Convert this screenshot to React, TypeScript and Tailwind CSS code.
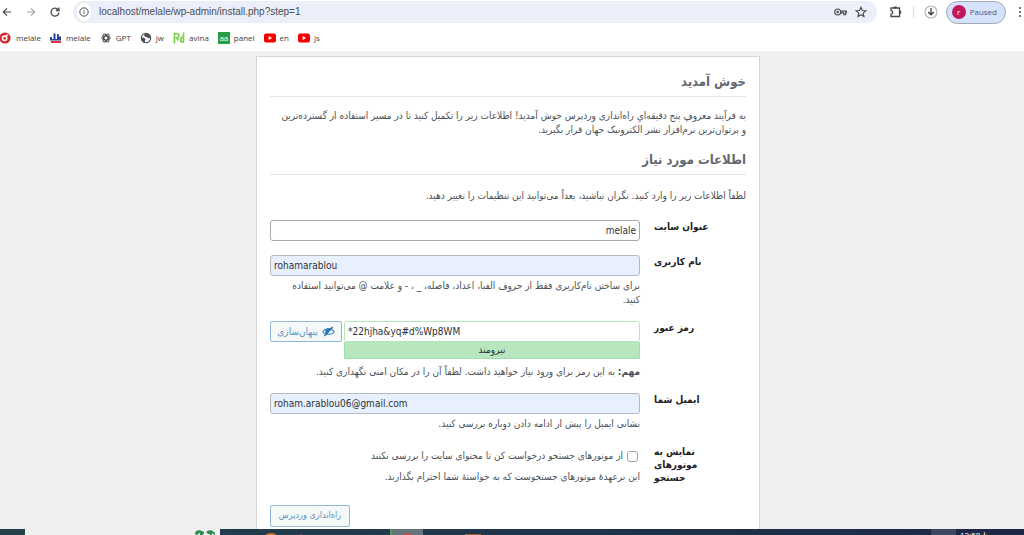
import React, { useState } from 'react';

interface Bookmark {
  label: string;
  icon: React.ReactNode;
}

const YoutubeIcon = () => (
  <svg viewBox="0 0 12 12" className="w-3 h-3">
    <rect x="0" y="1.5" width="12" height="9" rx="2" fill="#f40000" />
    <path d="M4.7 4v4L8.2 6z" fill="#fff" />
  </svg>
);

const bookmarks: Bookmark[] = [
  {
    label: 'melale',
    icon: (
      <svg viewBox="0 0 12 12" className="w-3 h-3">
        <circle cx="5" cy="6" r="5.600" fill="#d9222a" />
        <circle cx="4.600" cy="6.300" r="2.200" fill="none" stroke="#fff" strokeWidth="1.600" />
        <path d="M5.500 4.500l2.500-2" stroke="#fff" strokeWidth="1.400" />
      </svg>
    ),
  },
  {
    label: 'melale',
    icon: (
      <svg viewBox="0 0 12 12" className="w-3 h-3">
        <path d="M0 5h2v2h1.500V1.500h2V7H7V2h1.800v2.500H11V8.500H0z" fill="#2b3f9b" />
        <path d="M1 9h10v2H1z" fill="#e0303c" />
      </svg>
    ),
  },
  {
    label: 'GPT',
    icon: (
      <svg viewBox="0 0 12 12" className="w-3 h-3" fill="none" stroke="#4a4a4a" strokeWidth="1">
        <ellipse cx="6" cy="6" rx="4.400" ry="2" />
        <ellipse cx="6" cy="6" rx="4.400" ry="2" transform="rotate(60 6 6)" />
        <ellipse cx="6" cy="6" rx="4.400" ry="2" transform="rotate(120 6 6)" />
      </svg>
    ),
  },
  {
    label: 'jw',
    icon: (
      <svg viewBox="0 0 12 12" className="w-3 h-3">
        <circle cx="6" cy="6" r="4.700" fill="#fff" stroke="#4a4e52" strokeWidth="1.100" />
        <path d="M1.500 5.500l3 .5 1 1.500-1 3C2.500 9.800 1.300 8 1.500 5.500zM5 1.300c3-.5 5.300 1.400 5.700 4L8.500 6.500 7 5 5 4.800 4 3.200z" fill="#4a4e52" />
      </svg>
    ),
  },
  {
    label: 'avina',
    icon: (
      <svg viewBox="0 0 12 12" className="w-3 h-3" fill="none" stroke="#7ed04b" strokeWidth="1.700">
        <path d="M1.500 11.500V1.500h2c3.200 0 3.200 4.500 0 4.500l2 2.500M10.500 .5v10M10.500 5.200c-4 0-4 5 0 5" />
      </svg>
    ),
  },
  {
    label: 'panel',
    icon: (
      <span className="flex items-center justify-center w-3 h-3 bg-[#2a9d42] text-white leading-3">aa</span>
    ),
  },
  { label: 'en', icon: <YoutubeIcon /> },
  { label: 'js', icon: <YoutubeIcon /> },
];

const BrowserBar = () => (
  <header dir="ltr" className="shrink-0 bg-white text-[#3c4043] font-[family-name:'Open_Sans',sans-serif]">
    <div className="flex items-center h-6">
      <div className="flex items-center gap-3 pl-px pr-3">
        <button aria-label="Back">
          <svg viewBox="0 0 12 12" className="w-3 h-3" fill="none" stroke="#474a4d" strokeWidth="1.200">
            <path d="M10 6H2.500M6 2.300L2.300 6 6 9.700" />
          </svg>
        </button>
        <button aria-label="Forward">
          <svg viewBox="0 0 12 12" className="w-3 h-3" fill="none" stroke="#a5a8ab" strokeWidth="1.200">
            <path d="M2 6h7.500M6 2.300L9.700 6 6 9.700" />
          </svg>
        </button>
        <button aria-label="Reload">
          <svg viewBox="0 0 12 12" className="w-3 h-3" fill="none" stroke="#474a4d" strokeWidth="1.300">
            <path d="M9.300 3.800A4 4 0 1 0 10 6.500M9.900 1.500v3H6.800" />
          </svg>
        </button>
      </div>
      <div className="flex flex-1 items-center h-[22px] gap-2 pl-1 pr-2.5 rounded-full bg-[#ebeff9]">
        <span className="flex items-center justify-center w-[14px] h-[18px] rounded-full bg-white">
          <svg viewBox="0 0 12 12" className="w-[10px] h-[10px]" fill="none" stroke="#474a4d" strokeWidth="1.200">
            <circle cx="6" cy="6" r="5" />
            <path d="M6 5.300v3.200M6 3.200v1.200" />
          </svg>
        </span>
        <input
          aria-label="Address"
          defaultValue="localhost/melale/wp-admin/install.php?step=1"
          className="flex-1 min-w-0 bg-transparent text-[10px] leading-4 text-[#4a4d51] font-[family-name:'Liberation_Sans',sans-serif] outline-none"
        />
        <button aria-label="Passwords">
          <svg viewBox="0 0 14 10" className="w-[13px] h-[10px]" fill="none" stroke="#474a4d" strokeWidth="1.200">
            <circle cx="4" cy="5" r="3.200" />
            <circle cx="4" cy="5" r=".7" />
            <path d="M7 4h6.300v2h-.8v2h-2V6H7" />
          </svg>
        </button>
        <button aria-label="Bookmark">
          <svg viewBox="0 0 12 12" className="w-3 h-3" fill="none" stroke="#474a4d" strokeWidth="1.100">
            <path d="M6 1.300l1.400 3.200 3.400.3-2.600 2.300.8 3.400L6 8.700l-3 1.800.8-3.400L1.200 4.800l3.400-.3z" />
          </svg>
        </button>
      </div>
      <div className="flex items-center pl-3">
        <button aria-label="Extensions">
          <svg viewBox="0 0 14 14" className="w-[14px] h-[14px]" fill="none" stroke="#474a4d" strokeWidth="1.300">
            <path d="M2 3h8.500v8.500H2V9.200c2.200 0 2.200-3.700 0-3.700z" />
            <path d="M4.800 2.300h3M11.300 5.800v3" strokeWidth="1.800" />
          </svg>
        </button>
        <span className="w-px h-3 mx-2.5 bg-[#cfdff8]" />
        <button aria-label="Downloads">
          <svg viewBox="0 0 14 14" className="w-[14px] h-[14px]" fill="none">
            <circle cx="7" cy="7" r="6" stroke="#b5b8bb" strokeWidth="1.200" />
            <path d="M7 3v7M4.200 7L7 9.800 9.800 7" stroke="#3c4043" strokeWidth="1.300" />
          </svg>
        </button>
        <button className="flex items-center gap-1 h-[23px] ml-2 pl-[5px] pr-2 rounded-full border border-[#a3a8b3] bg-[#d5e2fc] text-[8px] text-[#46587f]">
          <span className="flex items-center justify-center w-[14px] h-[14px] rounded-full bg-[#c2185b] text-white">r</span>
          Paused
        </button>
        <button aria-label="Menu" className="ml-2.5">
          <svg viewBox="0 0 8 12" className="w-2 h-3" fill="#474a4d">
            <circle cx="4" cy="2" r="1" />
            <circle cx="4" cy="6" r="1" />
            <circle cx="4" cy="10" r="1" />
          </svg>
        </button>
      </div>
    </div>
    <nav className="flex items-center gap-[9px] h-[27px] text-[8px]">
      {bookmarks.map((b, i) => (
        <a key={i} href="#" className="flex items-center gap-1">
          {b.icon}
          {b.label}
        </a>
      ))}
    </nav>
  </header>
);

interface FieldProps {
  id: string;
  label: React.ReactNode;
  children: React.ReactNode;
}

const Field: React.FC<FieldProps> = ({ id, label, children }) => (
  <div className="flex">
    <label htmlFor={id} className="w-[106px] shrink-0 pl-[14px] text-left text-[10px] leading-[13px] font-bold text-[#1f2226]">
      {label}
    </label>
    <div className="flex-1 min-w-0">{children}</div>
  </div>
);

const inputStyles = 'block w-full h-[21px] px-[3px] rounded-[3px] border text-[10px] text-[#2c3338] outline-none';

const InstallForm = () => {
  const [title, setTitle] = useState('melale');
  const [user, setUser] = useState('rohamarablou');
  const [password, setPassword] = useState('*22hjha&yq#d%Wp8WM');
  const [email, setEmail] = useState('roham.arablou06@gmail.com');
  const [noIndex, setNoIndex] = useState(false);

  return (
    <div className="w-full max-w-[504px] mx-auto mt-[5px] px-[13px] pt-[15px] pb-5 bg-white border border-[#d4d5d7]">
      <h1 className="pb-1 border-b border-[#e4e5e7] text-[13px] leading-5 font-bold text-[#646970]">خوش آمدید</h1>
      <p className="mt-3 pl-[6px] leading-[14px]">
        به فرآیند معروفِ پنج دقیقه&zwnj;ایِ راه&zwnj;اندازی وردپرس خوش آمدید! اطلاعات زیر را تکمیل کنید تا در مسیر استفاده از گسترده&zwnj;ترین و پرتوان&zwnj;ترین نرم&zwnj;افزار نشر الکترونیک جهان قرار بگیرید.
      </p>
      <h2 className="mt-[13px] pb-1 border-b border-[#e4e5e7] text-[13px] leading-5 font-bold text-[#646970]">اطلاعات مورد نیاز</h2>
      <p className="mt-[14px] leading-[14px]">
        لطفاً اطلاعات زیر را وارد کنید. نگران نباشید، بعداً می&zwnj;توانید این تنظیمات را تغییر دهید.
      </p>

      <form className="mt-[17px]" onSubmit={(e) => e.preventDefault()}>
        <div className="flex flex-col gap-[14px]">
          <Field id="title" label="عنوان سایت">
            <input
              id="title"
              value={title}
              onChange={(e) => setTitle(e.target.value)}
              className={`${inputStyles} bg-white border-[#a9abae]`}
            />
          </Field>

          <Field id="user" label="نام کاربری">
            <input
              id="user"
              dir="ltr"
              value={user}
              onChange={(e) => setUser(e.target.value)}
              className={`${inputStyles} bg-[#e8f0fe] border-[#b4b9c4]`}
            />
            <p className="mt-[3px] pl-[6px] leading-[14px]">
              برای ساختن نام&zwnj;کاربری فقط از حروف الفبا، اعداد، فاصله، _ ، - و علامت @ می&zwnj;توانید استفاده کنید.
            </p>
          </Field>

          <Field id="password" label="رمز عبور">
            <div className="flex items-start gap-[2px]">
              <div className="flex-1 min-w-0">
                <input
                  id="password"
                  dir="ltr"
                  value={password}
                  onChange={(e) => setPassword(e.target.value)}
                  className={`${inputStyles} bg-white border-[#b0e8b8]`}
                />
                <div className="h-[17px] border border-t-0 border-[#9be0a4] bg-[#b8e6bf] text-center leading-4 text-[#2c3338]">
                  نیرومند
                </div>
              </div>
              <button
                type="button"
                className="flex items-center justify-center gap-1 w-[72px] h-[21px] rounded-[2px] border border-[#8fb7dc] bg-[#f6f7f7] text-[#5a93c4]"
              >
                <svg viewBox="0 0 14 12" className="w-[13px] h-[11px]" fill="none" stroke="#2271b1">
                  <path d="M.8 6.500C3.500 2 10.500 2 13.200 6.500 10.500 10 3.500 10 .8 6.500z" strokeWidth="1.100" />
                  <path d="M4 6a3 3 0 0 1 4.500-2.500L5 8.600A3 3 0 0 1 4 6z" fill="#2271b1" strokeWidth="1" />
                  <path d="M2.500 11L11.500 1" strokeWidth="1.600" />
                </svg>
                پنهان&zwnj;سازی
              </button>
            </div>
            <p className="mt-[6px] leading-[14px]">
              <strong>مهم:</strong> به این رمز برای ورود نیاز خواهید داشت. لطفاً آن را در مکان امنی نگهداری کنید.
            </p>
          </Field>

          <Field id="email" label="ایمیل شما">
            <input
              id="email"
              type="email"
              dir="ltr"
              value={email}
              onChange={(e) => setEmail(e.target.value)}
              className={`${inputStyles} bg-[#e8f0fe] border-[#b4b9c4]`}
            />
            <p className="mt-[3px] leading-[14px]">نشانی ایمیل را پیش از ادامه دادن دوباره بررسی کنید.</p>
          </Field>

          <Field
            id="noindex"
            label={
              <>
                نمایش به
                <br />
                موتورهای
                <br />
                جستجو
              </>
            }
          >
            <label className="flex items-center gap-1 pt-1 pr-[2px] leading-[14px]">
              <input
                id="noindex"
                type="checkbox"
                checked={noIndex}
                onChange={(e) => setNoIndex(e.target.checked)}
                className="appearance-none w-[11px] h-[11px] rounded-[3px] border border-[#a0a3a7] bg-white checked:bg-[#2271b1]"
              />
              از موتورهای جستجو درخواست کن تا محتوای سایت را بررسی نکنند
            </label>
            <p className="mt-[7px] leading-[14px]">
              این برعهدهٔ موتورهای جستجوست که به خواستهٔ شما احترام بگذارند.
            </p>
          </Field>
        </div>

        <div dir="ltr" className="mt-[21px]">
          <button
            dir="rtl"
            className="w-20 h-[22px] rounded-[2px] border border-[#8fb7dc] bg-[#f6f7f7] text-[9px] text-[#5a93c4] whitespace-nowrap"
          >
            راه&zwnj;اندازی وردپرس
          </button>
        </div>
      </form>
    </div>
  );
};

const Taskbar = () => (
  <footer dir="ltr" className="flex shrink-0 h-[6px] overflow-hidden bg-linear-to-r from-[#24424a] to-[#1c2746] font-[family-name:'Open_Sans',sans-serif]">
    <div className="flex justify-end w-[195px] ml-[25px] pr-1 bg-[#f0f1f1]">
      <svg viewBox="0 0 22 6" className="w-[22px] h-[6px]" fill="#2f8a50">
        <path d="M1 4c1-3 4-4 9-1v2L6 3.500 3 6 1 5zM12 3c3-3 7-2 9 1v2l-3-2-4 1zM6 3l3 1v2H6zM16 3l2 1v2h-2z" />
      </svg>
    </div>
    <svg viewBox="0 0 36 6" className="w-9 h-[6px] ml-[46px]">
      <path d="M0 6a5 2 0 0 1 10 0z" fill="#c87322" />
      <path d="M34 6l1-1 1 1z" fill="#b03060" />
    </svg>
    <div className="flex justify-center w-[33px] ml-[88px] border-l-2 border-[#4f9f5c] bg-[#65757b]">
      <svg viewBox="0 0 8 6" className="w-2 h-[6px]">
        <path d="M0 6a4 2 0 0 1 8 0z" fill="#cf4546" />
      </svg>
    </div>
    <svg viewBox="0 0 16 6" className="w-4 h-[6px] ml-[42px]">
      <path d="M0 6V5h16v1z" fill="#a85a35" />
    </svg>
    <div className="w-[25px] ml-auto bg-[#3d4860]" />
    <time className="w-[68px] pl-1 pt-px text-[8px] leading-[10px] text-white">12:58 ظ</time>
  </footer>
);

export default function App() {
  return (
    <div dir="rtl" lang="fa" className="flex flex-col h-screen overflow-hidden bg-[#f0f0f1]">
      <BrowserBar />
      <main className="flex-1 min-h-0 overflow-hidden pr-2 bg-[#efefef] text-[10px] text-[#4c5157] font-[family-name:'DejaVu_Sans_Condensed','DejaVu_Sans',sans-serif]">
        <InstallForm />
      </main>
      <Taskbar />
    </div>
  );
}
